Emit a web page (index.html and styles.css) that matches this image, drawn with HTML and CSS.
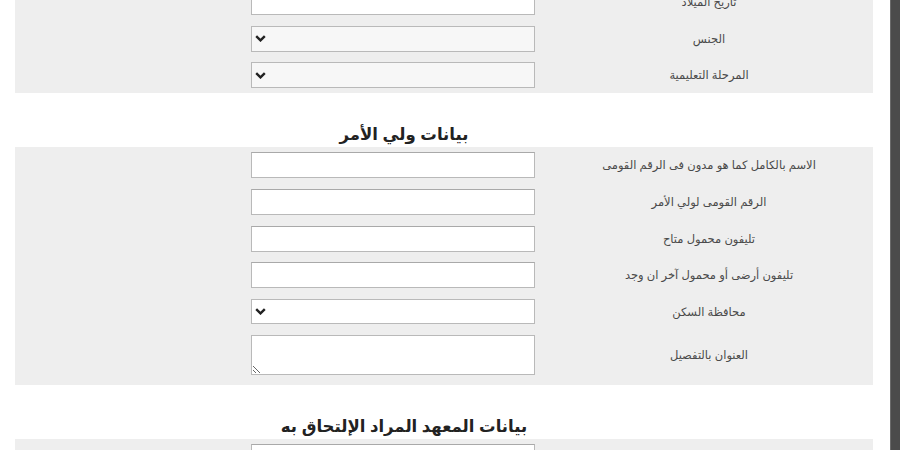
FILE: index.html
```html
<!DOCTYPE html>
<html lang="ar" dir="rtl">
<head>
    <meta charset="UTF-8">
    <meta name="viewport" content="width=device-width, initial-scale=1.0">
    <title>استمارة التقديم</title>
<link rel="stylesheet" href="styles.css">
</head>
<body>
    <div class="page">
        <main class="content">
            <section class="panel first">
                <div class="row">
                    <label>تاريخ الميلاد</label>
                    <div class="field"><input type="text" class="input"></div>
                </div>
                <div class="row">
                    <label>الجنس</label>
                    <div class="field"><select class="select muted"><option></option></select></div>
                </div>
                <div class="row">
                    <label>المرحلة التعليمية</label>
                    <div class="field"><select class="select muted"><option></option></select></div>
                </div>
            </section>

            <h2 class="title">بيانات ولي الأمر</h2>
            <section class="panel">
                <div class="row">
                    <label>الاسم بالكامل كما هو مدون فى الرقم القومى</label>
                    <div class="field"><input type="text" class="input"></div>
                </div>
                <div class="row">
                    <label>الرقم القومى لولي الأمر</label>
                    <div class="field"><input type="text" class="input"></div>
                </div>
                <div class="row">
                    <label>تليفون محمول متاح</label>
                    <div class="field"><input type="text" class="input"></div>
                </div>
                <div class="row">
                    <label>تليفون أرضى أو محمول آخر ان وجد</label>
                    <div class="field"><input type="text" class="input"></div>
                </div>
                <div class="row">
                    <label>محافظة السكن</label>
                    <div class="field"><select class="select small"><option></option></select></div>
                </div>
                <div class="row">
                    <label>العنوان بالتفصيل</label>
                    <div class="field"><textarea class="area"></textarea></div>
                </div>
            </section>

            <h2 class="title">بيانات المعهد المراد الإلتحاق به</h2>
            <section class="panel">
                <div class="row">
                    <label>اسم المعهد</label>
                    <div class="field"><input type="text" class="input"></div>
                </div>
            </section>
        </main>
        <div class="scrollbar"></div>
    </div>
</body>
</html>
```

FILE: styles.css
```css
*{
    margin: 0;
    padding: 0;
    box-sizing: border-box;
}
body{
    height: 100vh;
    overflow: hidden;
    background-color: white;
    font-family: "Liberation Sans", "DejaVu Sans", sans-serif;
}
.page{
    direction: ltr;
    display: flex;
    height: 100vh;
}
.content{
    direction: rtl;
    flex: 1;
    padding: 0 17px 0 15px;
    margin-top: -16px;
}
.panel{
    background-color: #eeeeee;
    display: flex;
    flex-direction: column;
    gap: 10.75px;
    padding: 5px 0 10px;
}
.panel.first{
    gap: 10.5px;
    padding: 5px 0 5px;
}
.row{
    display: grid;
    grid-template-columns: 328px 1fr;
    align-items: center;
}
.row label{
    text-align: center;
    font-size: 11.5px;
    color: #4a4a4a;
}
.field{
    display: flex;
    padding-right: 10px;
}
.input{
    width: 284px;
    height: 26px;
    border: 1px solid #b9b9b9;
    border-top-color: #a9a9a9;
    background-color: white;
}
.select{
    appearance: none;
    width: 284px;
    height: 26px;
    border: 1px solid #b9b9b9;
    background: white url("data:image/svg+xml,%3Csvg xmlns='http://www.w3.org/2000/svg' width='11' height='7' viewBox='0 0 11 7'%3E%3Cpath d='M1.2 1.2l4.3 4.2 4.3-4.2' fill='none' stroke='%23222' stroke-width='2.4'/%3E%3C/svg%3E") no-repeat 3px center;
}
.select.muted{
    background-color: #f7f7f7;
}
.select.small{
    height: 25px;
}
.area{
    width: 284px;
    height: 40px;
    border: 1px solid #b9b9b9;
    background-color: white;
    resize: both;
}
.title{
    height: 54px;
    padding: 29px 80px 0 0;
    text-align: center;
    font-size: 16.5px;
    line-height: 24px;
    color: #222;
}
.scrollbar{
    width: 10px;
    background-color: #4b4b4b;
    border-left: 1px solid #6a6a6a;
}
```
